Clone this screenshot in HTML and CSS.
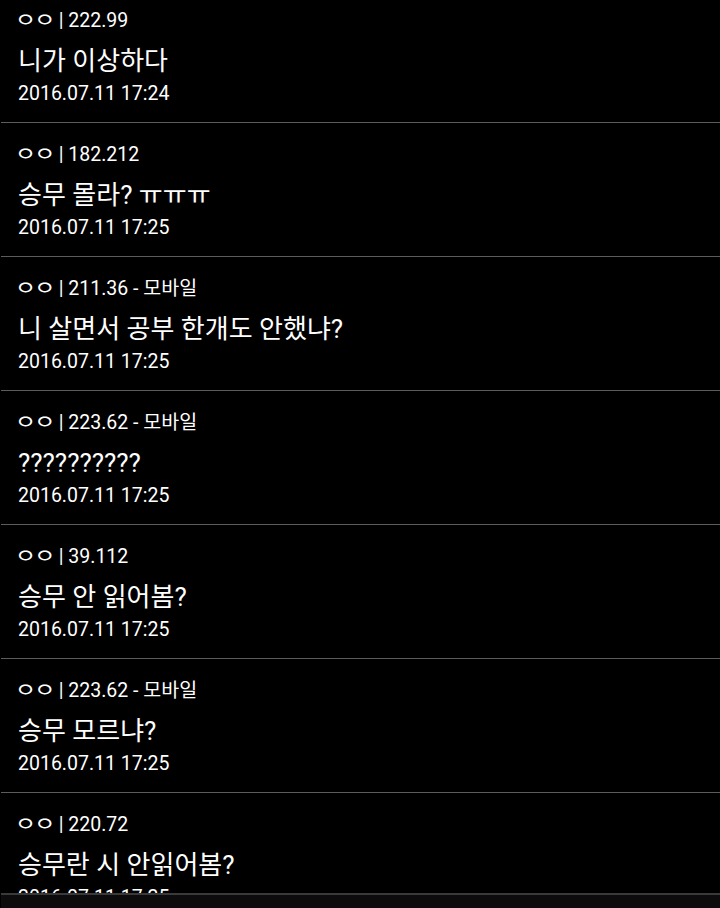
FILE: index.html
```html
<!DOCTYPE html>
<html lang="ko">
<head>
<meta charset="utf-8">
<link rel="stylesheet" href="styles.css">
</head>
<body>
<div class="list">
  <div class="item">
    <div class="meta"><span class="nick">ㅇㅇ</span> | 222.99</div>
    <div class="title">니가 이상하다</div>
    <div class="date">2016.07.11 17:24</div>
  </div>
  <div class="item">
    <div class="meta"><span class="nick">ㅇㅇ</span> | 182.212</div>
    <div class="title">승무 몰라? ㅠㅠㅠ</div>
    <div class="date">2016.07.11 17:25</div>
  </div>
  <div class="item">
    <div class="meta"><span class="nick">ㅇㅇ</span> | 211.36 - 모바일</div>
    <div class="title">니 살면서 공부 한개도 안했냐?</div>
    <div class="date">2016.07.11 17:25</div>
  </div>
  <div class="item">
    <div class="meta"><span class="nick">ㅇㅇ</span> | 223.62 - 모바일</div>
    <div class="title">??????????</div>
    <div class="date">2016.07.11 17:25</div>
  </div>
  <div class="item">
    <div class="meta"><span class="nick">ㅇㅇ</span> | 39.112</div>
    <div class="title">승무 안 읽어봄?</div>
    <div class="date">2016.07.11 17:25</div>
  </div>
  <div class="item">
    <div class="meta"><span class="nick">ㅇㅇ</span> | 223.62 - 모바일</div>
    <div class="title">승무 모르냐?</div>
    <div class="date">2016.07.11 17:25</div>
  </div>
  <div class="item">
    <div class="meta"><span class="nick">ㅇㅇ</span> | 220.72</div>
    <div class="title">승무란 시 안읽어봄?</div>
    <div class="date">2016.07.11 17:25</div>
  </div>
</div>
<div class="bottom-bar"></div>
</body>
</html>
```
FILE: styles.css
```css
html, body {
  margin: 0;
  padding: 0;
  background: #000;
  height: 908px;
  overflow: hidden;
}
body {
  font-family: Roboto, "Noto Sans CJK KR", sans-serif;
  color: #fff;
}
.list {
  margin-top: -11px;
}
.item {
  padding: 19px 0 14px 17px;
  margin-left: 1px;
  border-bottom: 1px solid #5c5c5c;
}
.meta {
  font-size: 19.5px;
  line-height: 26px;
  height: 26px;
}
.nick {
  display: inline-block;
  letter-spacing: -2px;
  margin-right: 4px;
  transform: scale(1.2, 1);
  transform-origin: 50% 50%;
}
.title {
  margin-top: 8px;
  font-size: 26px;
  line-height: 38px;
  height: 38px;
}
.date {
  font-size: 19.5px;
  line-height: 28px;
  height: 28px;
}
.bottom-bar {
  position: fixed;
  left: 1px;
  right: 0;
  bottom: 0;
  height: 13px;
  border-top: 2px solid #3a3a3a;
  background: #0c0c0c;
}
```
